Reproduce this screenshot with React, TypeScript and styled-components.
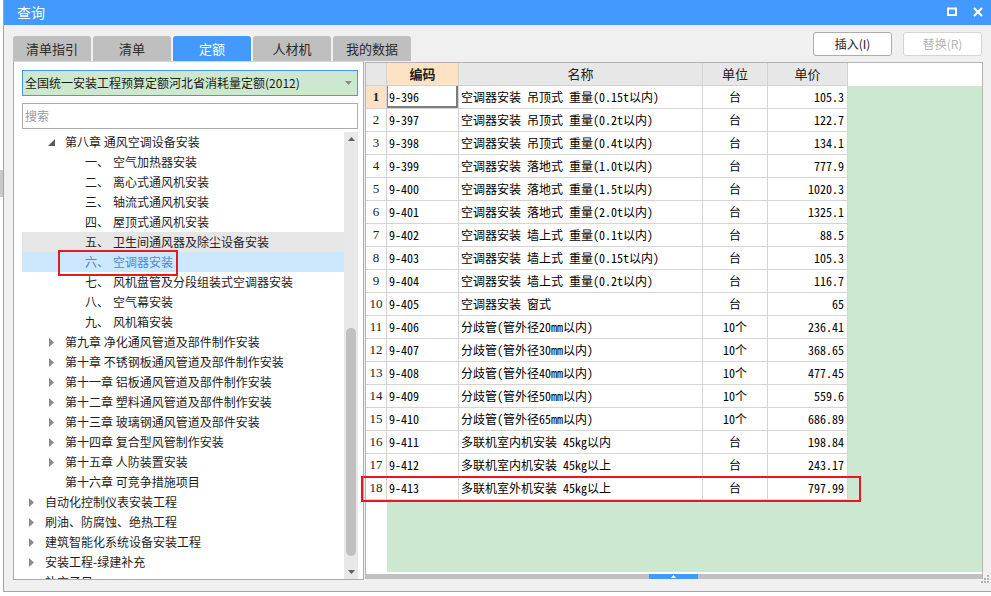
import React from 'react';
import styled, { createGlobalStyle, css } from 'styled-components';

const GlobalStyle = createGlobalStyle`
  html, body { margin: 0; padding: 0; background: #ffffff; }
  body {
    width: 991px; height: 596px; overflow: hidden;
    font-family: "Noto Sans CJK SC", "Noto Sans", sans-serif;
  }
  * { box-sizing: border-box; }
`;

const UI = `"Noto Sans CJK SC", "Noto Sans", sans-serif`;
const GRID = `"Noto Sans Mono CJK SC", "Noto Sans CJK SC", "Liberation Mono", monospace`;

const Desktop = styled.div`
  position: relative;
  width: 991px;
  height: 596px;
  padding-left: 3px;
`;

const BehindWindow = styled.div`
  position: absolute;
  left: 0; top: 170px;
  width: 3px; height: 27px;
  background: #c9c9c9;
`;

const Window = styled.div`
  position: relative;
  height: 592px;
  border-left: 1px solid #a3a3a3;
  border-bottom: 1px solid #a3a3a3;
  background: #f0f0f0;
  display: flex;
  flex-direction: column;
`;

const TitleBar = styled.div`
  height: 25px;
  flex: none;
  background: #4499ff;
  display: flex;
  align-items: center;
  justify-content: space-between;
  padding: 0 8px 0 13px;
  color: #fff;
  font: 14px/25px ${UI};
`;

const TitleIcons = styled.div`
  display: flex;
  align-items: center;
  gap: 16px;
  padding-bottom: 2px;
`;

const TopBar = styled.div`
  height: 36px;
  flex: none;
  display: flex;
  justify-content: space-between;
  padding: 0 9px;
`;

const Tabs = styled.div`
  align-self: flex-end;
  display: flex;
  gap: 2px;
`;

const Tab = styled.div<{ $active?: boolean }>`
  width: 78px;
  height: 25px;
  border-radius: 3px 3px 0 0;
  background: ${p => (p.$active ? '#4499ff' : '#bfbfbf')};
  color: ${p => (p.$active ? '#fff' : '#2b2b2b')};
  font: 13px/25px ${UI};
  text-align: center;
`;

const Buttons = styled.div`
  display: flex;
  gap: 11px;
  margin-top: 7px;
`;

const Button = styled.div<{ $disabled?: boolean }>`
  width: 79px;
  height: 24px;
  border-radius: 3px;
  background: #fff;
  border: 1px solid ${p => (p.$disabled ? '#d4d4d4' : '#adadad')};
  color: ${p => (p.$disabled ? '#b5b5b5' : '#222')};
  font: 12px/22px ${UI};
  text-align: center;
`;

const Main = styled.div`
  display: flex;
  gap: 1px;
  padding-left: 9px;
`;

const LeftPanel = styled.div`
  width: 351px;
  height: 519px;
  border: 1px solid #acacac;
  border-top-color: #d6d6d6;
  background: #fff;
  display: flex;
  flex-direction: column;
  padding: 8px 5px 0 8px;
`;

const Select = styled.div`
  position: relative;
  height: 26px;
  flex: none;
  border: 1px solid #4a95ee;
  background: #cde8cf;
  color: #1a1a1a;
  font: 12px/24px ${UI};
  padding-left: 2px;
  display: flex;
  align-items: center;
  justify-content: space-between;
  padding-right: 5px;
`;

const Search = styled.div`
  margin-top: 7px;
  height: 26px;
  flex: none;
  border: 1px solid #ababab;
  color: #9a9a9a;
  font: 12px/24px ${UI};
  padding-left: 2px;
`;

const TreeBox = styled.div`
  margin-top: 3px;
  flex: 1;
  display: flex;
  min-height: 0;
`;

const TreeList = styled.div`
  flex: 1;
  overflow: hidden;
`;

const TreeRow = styled.div<{ $level: number; $state?: 'hover' | 'selected' }>`
  position: relative;
  height: 20px;
  display: flex;
  align-items: center;
  padding-left: ${p => (p.$level - 1) * 20}px;
  font: 12px/20px ${UI};
  color: #1e1e1e;
  white-space: nowrap;
  ${p => p.$state === 'hover' && css`background: #e6e6e6;`}
  ${p => p.$state === 'selected' && css`background: #cce8ff; color: #4a88d6;`}
`;

const Toggle = styled.span`
  width: 23px;
  flex: none;
  display: flex;
  align-items: center;
  padding-left: 6px;
`;

const Prefix = styled.span`
  width: 28px;
  flex: none;
`;

const RedMark = styled.div`
  position: absolute;
  border: 2px solid #e31a22;
  pointer-events: none;
`;

const TreeMark = styled(RedMark)`
  left: 36px;
  top: -2px;
  width: 120px;
  height: 26px;
`;

const VScroll = styled.div`
  width: 14px;
  flex: none;
  background: #e8e8e8;
  display: flex;
  flex-direction: column;
`;

const ScrollArrow = styled.div`
  height: 14px;
  flex: none;
  display: flex;
  align-items: center;
  justify-content: center;
`;

const VTrack = styled.div`
  flex: 1;
  padding: 0 2px;
`;

const VThumb = styled.div`
  width: 10px;
  border-radius: 5px;
  background: #c0c0c0;
`;

const RightPanel = styled.div`
  width: 618px;
  height: 517px;
  margin-top: 1px;
  border: 1px solid #b4b4b4;
  border-bottom: none;
  background: #fff;
  display: flex;
  flex-direction: column;
`;

const HeadRow = styled.div`
  height: 23px;
  flex: none;
  display: flex;
`;

const HeadCell = styled.div<{ $w: number; $active?: boolean }>`
  width: ${p => p.$w}px;
  flex: none;
  border-right: 1px solid #d2d2d2;
  border-bottom: 1px solid #d2d2d2;
  background: ${p => (p.$active ? '#fde3c3' : '#e7e7e7')};
  color: #222;
  font: ${p => (p.$active ? 'bold' : 'normal')} 13px/22px ${UI};
  text-align: center;
`;

const Body = styled.div`
  flex: 1;
  background: linear-gradient(to right, #fff 0 21px, #cde8d1 21px);
`;

const Row = styled.div`
  position: relative;
  height: 23px;
  display: flex;
`;

const RowMark = styled(RedMark)`
  left: -5px;
  top: -1px;
  width: 500px;
  height: 26px;
`;

const Cell = styled.div<{ $w: number; $align?: 'left' | 'center' | 'right'; $focus?: boolean }>`
  width: ${p => p.$w}px;
  flex: none;
  border-right: 1px solid #d4d4d4;
  border-bottom: 1px solid #d4d4d4;
  background: #fff;
  color: #000;
  font: 12px/22px ${GRID};
  text-align: ${p => p.$align || 'left'};
  padding: 0 ${p => (p.$align === 'right' ? '3px' : '0')} 0 ${p => (p.$align === 'left' || !p.$align ? '2px' : '0')};
  white-space: nowrap;
  overflow: hidden;
  ${p => p.$focus && css`box-shadow: inset 1px 0 0 #4499ff, inset -2px -2px 0 #7d7d7d;`}
`;

const NumCell = styled.div<{ $current?: boolean }>`
  width: 21px;
  flex: none;
  border-right: 1px solid #d4d4d4;
  border-bottom: 1px solid #d4d4d4;
  background: ${p => (p.$current ? '#fde3c3' : '#fff')};
  color: #222;
  font: ${p => (p.$current ? 'bold' : 'normal')} 13px/22px "Liberation Serif", serif;
  text-align: center;
`;

const BottomGap = styled.div`
  height: 2px;
  flex: none;
`;

const HScroll = styled.div`
  height: 5px;
  flex: none;
  background: #c0c0c0;
  display: flex;
`;

const HThumb = styled.div`
  height: 5px;
  background: #4499ff;
  display: flex;
  align-items: center;
  justify-content: center;
`;

const Grip = styled.div`
  position: absolute;
  right: 1px;
  bottom: 2px;
`;

type Node = {
  level: number;
  text: string;
  prefix?: string;
  toggle?: 'open' | 'closed';
  state?: 'hover' | 'selected';
  marked?: boolean;
};

const tree: Node[] = [
  { level: 2, text: '第八章 通风空调设备安装', toggle: 'open' },
  { level: 3, prefix: '一、', text: '空气加热器安装' },
  { level: 3, prefix: '二、', text: '离心式通风机安装' },
  { level: 3, prefix: '三、', text: '轴流式通风机安装' },
  { level: 3, prefix: '四、', text: '屋顶式通风机安装' },
  { level: 3, prefix: '五、', text: '卫生间通风器及除尘设备安装', state: 'hover' },
  { level: 3, prefix: '六、', text: '空调器安装', state: 'selected', marked: true },
  { level: 3, prefix: '七、', text: '风机盘管及分段组装式空调器安装' },
  { level: 3, prefix: '八、', text: '空气幕安装' },
  { level: 3, prefix: '九、', text: '风机箱安装' },
  { level: 2, text: '第九章 净化通风管道及部件制作安装', toggle: 'closed' },
  { level: 2, text: '第十章 不锈钢板通风管道及部件制作安装', toggle: 'closed' },
  { level: 2, text: '第十一章 铝板通风管道及部件制作安装', toggle: 'closed' },
  { level: 2, text: '第十二章 塑料通风管道及部件制作安装', toggle: 'closed' },
  { level: 2, text: '第十三章 玻璃钢通风管道及部件安装', toggle: 'closed' },
  { level: 2, text: '第十四章 复合型风管制作安装', toggle: 'closed' },
  { level: 2, text: '第十五章 人防装置安装', toggle: 'closed' },
  { level: 2, text: '第十六章 可竞争措施项目' },
  { level: 1, text: '自动化控制仪表安装工程', toggle: 'closed' },
  { level: 1, text: '刷油、防腐蚀、绝热工程', toggle: 'closed' },
  { level: 1, text: '建筑智能化系统设备安装工程', toggle: 'closed' },
  { level: 1, text: '安装工程-绿建补充', toggle: 'closed' },
  { level: 1, text: '补充子目' },
];

const rows: [string, string, string, string][] = [
  ['9-396', '空调器安装 吊顶式 重量(0.15t以内)', '台', '105.3'],
  ['9-397', '空调器安装 吊顶式 重量(0.2t以内)', '台', '122.7'],
  ['9-398', '空调器安装 吊顶式 重量(0.4t以内)', '台', '134.1'],
  ['9-399', '空调器安装 落地式 重量(1.0t以内)', '台', '777.9'],
  ['9-400', '空调器安装 落地式 重量(1.5t以内)', '台', '1020.3'],
  ['9-401', '空调器安装 落地式 重量(2.0t以内)', '台', '1325.1'],
  ['9-402', '空调器安装 墙上式 重量(0.1t以内)', '台', '88.5'],
  ['9-403', '空调器安装 墙上式 重量(0.15t以内)', '台', '105.3'],
  ['9-404', '空调器安装 墙上式 重量(0.2t以内)', '台', '116.7'],
  ['9-405', '空调器安装 窗式', '台', '65'],
  ['9-406', '分歧管(管外径20mm以内)', '10个', '236.41'],
  ['9-407', '分歧管(管外径30mm以内)', '10个', '368.65'],
  ['9-408', '分歧管(管外径40mm以内)', '10个', '477.45'],
  ['9-409', '分歧管(管外径50mm以内)', '10个', '559.6'],
  ['9-410', '分歧管(管外径65mm以内)', '10个', '686.89'],
  ['9-411', '多联机室内机安装 45kg以内', '台', '198.84'],
  ['9-412', '多联机室内机安装 45kg以上', '台', '243.17'],
  ['9-413', '多联机室外机安装 45kg以上', '台', '797.99'],
];

const COLS = { code: 72, name: 244, unit: 65, price: 80 };

const Arrow = ({ open }: { open: boolean }) =>
  open ? (
    <svg width="7" height="7" viewBox="0 0 7 7"><polygon points="7,0 7,7 0,7" fill="#5a5a5a" /></svg>
  ) : (
    <svg width="5" height="9" viewBox="0 0 5 9" style={{ marginLeft: 1 }}><polygon points="0,0 5,4.5 0,9" fill="#8a8a8a" /></svg>
  );

export default function App() {
  const treeScroll = { offset: 182, size: 228 };
  const hScroll = { offset: 283, size: 49 };
  return (
    <Desktop>
      <GlobalStyle />
      <BehindWindow />
      <Window>
        <TitleBar>
          <span>查询</span>
          <TitleIcons>
            <svg width="10" height="9" viewBox="0 0 10 9">
              <rect x="1" y="1.5" width="8" height="6.5" fill="none" stroke="#fff" strokeWidth="2" />
            </svg>
            <svg width="10" height="10" viewBox="0 0 10 10">
              <path d="M1 1 L9 9 M9 1 L1 9" stroke="#fff" strokeWidth="2.2" />
            </svg>
          </TitleIcons>
        </TitleBar>

        <TopBar>
          <Tabs>
            <Tab>清单指引</Tab>
            <Tab>清单</Tab>
            <Tab $active>定额</Tab>
            <Tab>人材机</Tab>
            <Tab>我的数据</Tab>
          </Tabs>
          <Buttons>
            <Button>插入(I)</Button>
            <Button $disabled>替换(R)</Button>
          </Buttons>
        </TopBar>

        <Main>
          <LeftPanel>
            <Select>
              <span>全国统一安装工程预算定额河北省消耗量定额(2012)</span>
              <svg width="7" height="4" viewBox="0 0 7 4"><polygon points="0,0 7,0 3.5,4" fill="#8c8c8c" /></svg>
            </Select>
            <Search>搜索</Search>
            <TreeBox>
              <TreeList>
                {tree.map((n, i) => (
                  <TreeRow key={i} $level={n.level} $state={n.state}>
                    <Toggle>{n.toggle && <Arrow open={n.toggle === 'open'} />}</Toggle>
                    {n.prefix && <Prefix>{n.prefix}</Prefix>}
                    <span>{n.text}</span>
                    {n.marked && <TreeMark />}
                  </TreeRow>
                ))}
              </TreeList>
              <VScroll>
                <ScrollArrow>
                  <svg width="7" height="4" viewBox="0 0 7 4"><polygon points="3.5,0 7,4 0,4" fill="#5f5f5f" /></svg>
                </ScrollArrow>
                <VTrack>
                  <VThumb style={{ marginTop: treeScroll.offset, height: treeScroll.size }} />
                </VTrack>
                <ScrollArrow>
                  <svg width="7" height="4" viewBox="0 0 7 4"><polygon points="0,0 7,0 3.5,4" fill="#5f5f5f" /></svg>
                </ScrollArrow>
              </VScroll>
            </TreeBox>
          </LeftPanel>

          <RightPanel>
            <HeadRow>
              <HeadCell $w={21} />
              <HeadCell $w={COLS.code} $active>编码</HeadCell>
              <HeadCell $w={COLS.name}>名称</HeadCell>
              <HeadCell $w={COLS.unit}>单位</HeadCell>
              <HeadCell $w={COLS.price}>单价</HeadCell>
            </HeadRow>
            <Body>
              {rows.map((r, i) => (
                <Row key={r[0]}>
                  <NumCell $current={i === 0}>{i + 1}</NumCell>
                  <Cell $w={COLS.code} $focus={i === 0}>{r[0]}</Cell>
                  <Cell $w={COLS.name}>{r[1]}</Cell>
                  <Cell $w={COLS.unit} $align="center">{r[2]}</Cell>
                  <Cell $w={COLS.price} $align="right">{r[3]}</Cell>
                  {i === rows.length - 1 && <RowMark />}
                </Row>
              ))}
            </Body>
            <BottomGap />
            <HScroll>
              <HThumb style={{ marginLeft: hScroll.offset, width: hScroll.size }}>
                <svg width="5" height="3" viewBox="0 0 5 3"><polygon points="2.5,0 5,3 0,3" fill="#fff" /></svg>
              </HThumb>
            </HScroll>
          </RightPanel>
        </Main>

        <Grip>
          <svg width="9" height="9" viewBox="0 0 9 9" fill="#b3b3b3">
            <rect x="6" y="0" width="2" height="2" />
            <rect x="3" y="3" width="2" height="2" />
            <rect x="6" y="3" width="2" height="2" />
            <rect x="0" y="6" width="2" height="2" />
            <rect x="3" y="6" width="2" height="2" />
            <rect x="6" y="6" width="2" height="2" />
          </svg>
        </Grip>
      </Window>
    </Desktop>
  );
}
